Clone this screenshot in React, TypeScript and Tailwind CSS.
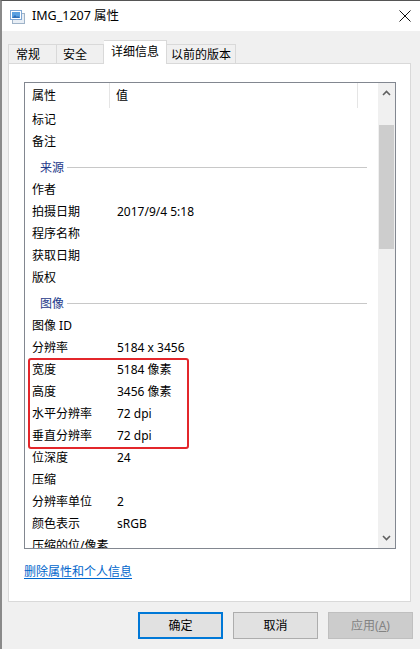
import React from 'react';

type Row = { name: string; value?: string; group?: boolean };

const topRows: Row[] = [
  { name: '标记' },
  { name: '备注' },
  { name: '来源', group: true },
  { name: '作者' },
  { name: '拍摄日期', value: '2017/9/4 5:18' },
  { name: '程序名称' },
  { name: '获取日期' },
  { name: '版权' },
  { name: '图像', group: true },
  { name: '图像 ID' },
  { name: '分辨率', value: '5184 x 3456' },
];

const markedRows: Row[] = [
  { name: '宽度', value: '5184 像素' },
  { name: '高度', value: '3456 像素' },
  { name: '水平分辨率', value: '72 dpi' },
  { name: '垂直分辨率', value: '72 dpi' },
];

const bottomRows: Row[] = [
  { name: '位深度', value: '24' },
  { name: '压缩' },
  { name: '分辨率单位', value: '2' },
  { name: '颜色表示', value: 'sRGB' },
  { name: '压缩的位/像素' },
];

function PropRow({ row }: { row: Row }) {
  if (row.group) {
    return (
      <div className="h-[26px] flex items-center pt-[5px] pl-[15px] pr-[11px]">
        <span className="text-[#1e3a8a] whitespace-nowrap">{row.name}</span>
        <div className="flex-1 h-px bg-[#c8c8c8] ml-[3px]" />
      </div>
    );
  }
  return (
    <div className="h-[22px] flex items-center pt-[2px]">
      <div className="w-[92px] pl-[7px] whitespace-nowrap">{row.name}</div>
      <div className="whitespace-nowrap">{row.value}</div>
    </div>
  );
}

function Chevron({ up }: { up?: boolean }) {
  return (
    <svg width="9" height="6" viewBox="0 0 9 6">
      <path
        d={up ? 'M1 5 L4.5 1.5 L8 5' : 'M1 1 L4.5 4.5 L8 1'}
        fill="none"
        stroke="#606060"
        strokeWidth="1.6"
      />
    </svg>
  );
}

function FileIcon() {
  return (
    <svg width="16" height="16" viewBox="0 0 16 16">
      <rect x="2.5" y="4.5" width="12" height="10" fill="#e8eef5" stroke="#9fb3c8" />
      <rect x="0.5" y="1.5" width="11" height="9" fill="#ffffff" stroke="#7fa7d4" />
      <rect x="2" y="3" width="8" height="6" fill="#5aa0e0" />
      <path d="M2 9 L5 6 L7 8 L8 7 L10 9 Z" fill="#2e6fb8" />
    </svg>
  );
}

export default function App() {
  return (
    <div
      className="w-[420px] h-[649px] bg-[#f0f0f0] border-l-2 border-t border-l-[#8a8a8a] border-t-[#555555] flex flex-col text-[12px] text-black overflow-hidden"
      style={{ fontFamily: '"Noto Sans", "Noto Sans CJK SC", sans-serif' }}
    >
      {/* title bar */}
      <div className="h-[30px] bg-white flex items-center shrink-0">
        <div className="ml-[8px] mt-[1px]">
          <FileIcon />
        </div>
        <div className="ml-[6px] text-[12.5px]">IMG_1207 属性</div>
        <div className="ml-auto mr-[9px]">
          <svg width="12" height="12" viewBox="0 0 12 12">
            <path d="M0.5 0.5 L11.5 11.5 M11.5 0.5 L0.5 11.5" stroke="#111" strokeWidth="1" />
          </svg>
        </div>
      </div>

      {/* tabs */}
      <div className="flex items-end h-[23px] mt-[9px] pl-[6px] relative z-10 shrink-0">
        <div className="w-[49px] h-[19px] border border-b-0 border-[#d9d9d9] flex items-center pl-[7px] pt-[1px]">常规</div>
        <div className="w-[47px] h-[19px] border border-b-0 border-l-0 border-[#d9d9d9] flex items-center pl-[6px] pt-[1px]">安全</div>
        <div className="w-[63px] h-[24px] -mb-px bg-white border border-b-0 border-l-0 border-[#d9d9d9] flex items-center pl-[7px] pb-[2px]">
          详细信息
        </div>
        <div className="w-[69px] h-[19px] border border-b-0 border-l-0 border-[#d9d9d9] flex items-center pl-[4px] pt-[1px]">以前的版本</div>
      </div>

      {/* panel */}
      <div className="ml-[6px] w-[403px] h-[539px] bg-white border border-[#d9d9d9] shrink-0 pl-[15px] pt-[18px]">
        <div className="w-[372px] h-[467px] border border-[#828790] flex">
          <div className="flex-1 overflow-hidden">
            <div className="h-[25px] flex">
              <div className="w-[85px] pl-[7px] pt-[4px] border-r border-[#e5e5e5]">属性</div>
              <div className="w-[248px] pl-[6px] pt-[4px] border-r border-[#e5e5e5]">值</div>
            </div>
            {topRows.map((r) => (
              <PropRow key={r.name} row={r} />
            ))}
            <div className="relative">
              {markedRows.map((r) => (
                <PropRow key={r.name} row={r} />
              ))}
              <div className="absolute left-[3px] top-0 w-[161px] h-[91px] border-2 border-[#e3262b] rounded-[3px]" />
            </div>
            {bottomRows.map((r) => (
              <PropRow key={r.name} row={r} />
            ))}
          </div>
          {/* scrollbar */}
          <div className="w-[17px] bg-[#f0f0f0] flex flex-col items-center">
            <div className="h-[17px] flex items-center justify-center pt-[2px]">
              <Chevron up />
            </div>
            <div className="flex-1 w-full px-px pt-[25px]">
              <div className="h-[124px] bg-[#cdcdcd]" />
            </div>
            <div className="h-[17px] flex items-center justify-center pb-[4px]">
              <Chevron />
            </div>
          </div>
        </div>
        <div className="mt-[14px]">
          <span className="text-[#0066cc] underline underline-offset-2">删除属性和个人信息</span>
        </div>
      </div>

      {/* buttons */}
      <div className="flex justify-end gap-[10px] pr-[7px] mt-[10px]">
        <div className="w-[85px] h-[27px] bg-[#e1e1e1] border-2 border-[#0078d7] flex items-center justify-center">确定</div>
        <div className="w-[85px] h-[27px] bg-[#e1e1e1] border border-[#adadad] flex items-center justify-center">取消</div>
        <div className="w-[85px] h-[27px] bg-[#cccccc] border border-[#bfbfbf] flex items-center justify-center text-[#838383]">
          应用(<span className="underline">A</span>)
        </div>
      </div>
    </div>
  );
}
